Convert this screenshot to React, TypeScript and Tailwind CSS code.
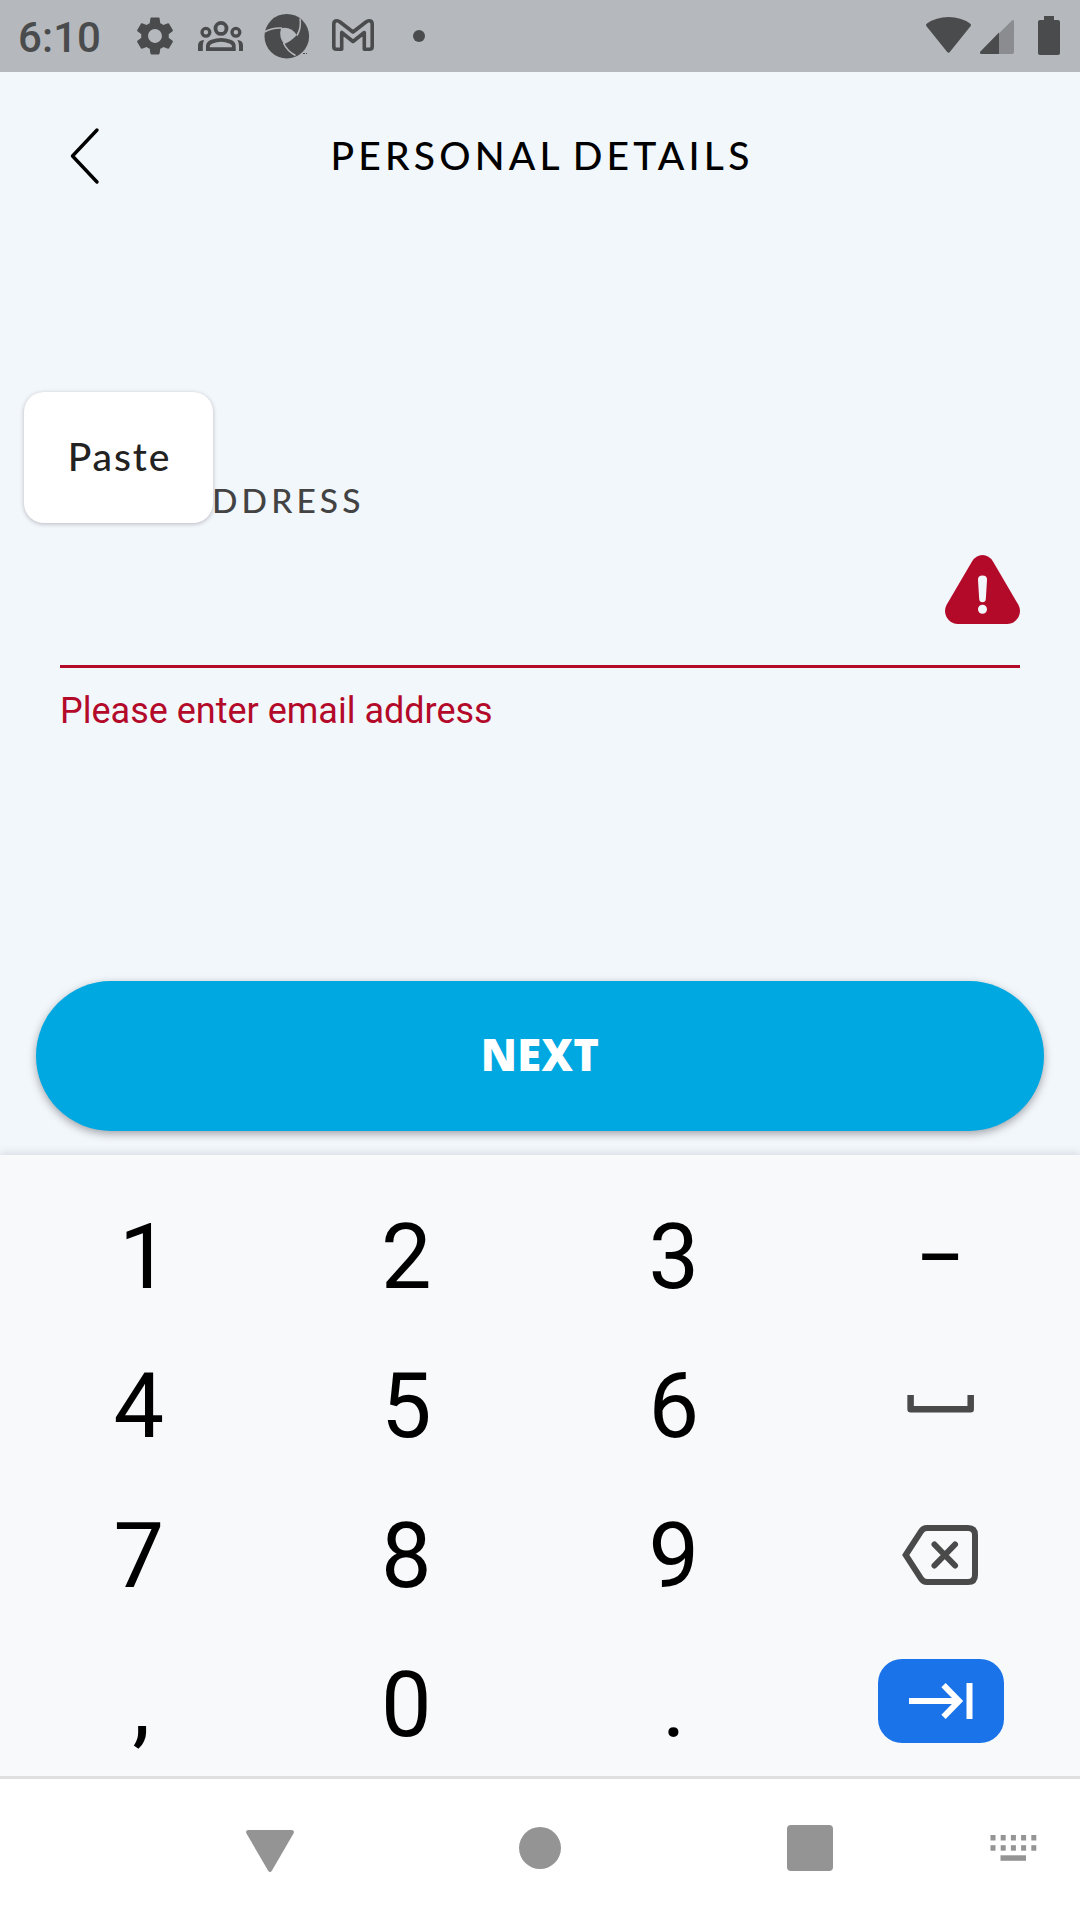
import React from 'react';
import { MdSettings } from 'react-icons/md';

const brand = "font-['Lato',sans-serif]";

function StatusBar() {
  return (
    <header className="flex h-[72px] shrink-0 items-center bg-[#b5b8bc] text-[#4a4b4c]">
      <span className="ml-[18px] w-[114px] text-[42px] leading-[72px] font-medium tracking-[0.1px] pt-[3px]">6:10</span>
      <MdSettings className="size-[46px]" />
      <svg className="ml-[20px] h-[72px] w-[45px]" viewBox="198 0 45 72" fill="none" stroke="currentColor" strokeWidth="3.8">
        <circle cx="221" cy="28.4" r="5.5" />
        <circle cx="205.9" cy="32.3" r="3.9" strokeWidth="3.3" />
        <circle cx="235.9" cy="32.3" r="3.9" strokeWidth="3.3" />
        <path d="M207.9 49.2V46Q208 43 212 41.6Q221 38.3 230 41.6Q233.8 43 233.8 46V49.2Z" />
        <path d="M198 51V45.5Q198 40.2 204 39.9Q202.800 43 202.800 46V51ZM243 51V45.500Q243 40.200 237.500 39.900Q239 43 239 46V51Z" fill="currentColor" stroke="none" />
      </svg>
      <svg className="ml-[21px] h-[72px] w-[46px]" viewBox="264 0 46 72">
        <circle cx="286.800" cy="36.200" r="22.300" fill="currentColor" />
        <path d="M281 28.200Q290.500 26 296.800 35Q291 41.500 284 44Q278.500 37 281 28.200Z" fill="#b5b8bc" />
        <g fill="none" stroke="#b5b8bc" strokeWidth="1.500">
          <path d="M264.500 32Q272 27.500 282 28" />
          <path d="M297 35.500Q301.500 28 300 18.500" />
          <path d="M283.500 43Q287 51 295.500 55.500" />
        </g>
        <path d="M303 53.500h2M306 53.500h1" stroke="currentColor" strokeWidth="1" />
      </svg>
      <svg className="ml-[22px] h-[72px] w-[42px]" viewBox="332 0 42 72" fill="none" stroke="currentColor" strokeWidth="3.600" strokeLinejoin="round">
        <path d="M333.800 46.500V24Q333.800 20.800 337 20.800Q338.500 20.800 340 22L353 32L366 22Q367.500 20.800 369 20.800Q372.200 20.800 372.200 24V46.500Q372.200 49.300 369.500 49.300H364.300V32.500L353 41.500L341.700 32.500V49.300H336.500Q333.800 49.300 333.800 46.500Z" />
      </svg>
      <span className="ml-[39px] size-[12px] rounded-full bg-current" />
      <svg className="ml-auto mr-[18px] h-[72px] w-[136px]" viewBox="926 0 136 72" fill="currentColor">
        <path d="M926.300 26Q925.500 24.500 927 23.500Q936 17 948.500 17Q961 17 970 23.500Q971.500 24.500 970.700 26L950 51.800Q948.500 53.500 947 51.800Z" />
        <path d="M1012 20.500Q1014 19 1014 22V52Q1014 54 1012 54H982Q979 54 980.500 51.500Z" opacity=".4" />
        <path d="M999 32.500V54H982Q979 54 980.500 51.500Z" />
        <path d="M1044 16h10v4h4q2 0 2 2v31q0 2-2 2h-18q-2 0-2-2v-31q0-2 2-2h4z" />
      </svg>
    </header>
  );
}

function BackIcon() {
  return (
    <svg className="h-[58px] w-[32px]" viewBox="0 0 32 58" fill="none" stroke="#000" strokeWidth="3.400" strokeLinecap="round" strokeLinejoin="round">
      <path d="M28 3L3.500 29L28 55" />
    </svg>
  );
}

function WarningIcon() {
  return (
    <svg className="h-[69px] w-[75px]" viewBox="0 0 75 69">
      <path d="M27 6.500Q31 0 37.500 0Q44 0 48 6.500L73.500 50Q76.500 56 73.500 62Q69.500 69 62.500 69H12.500Q5.500 69 1.500 62Q-1.500 56 1.500 50Z" fill="#b40a2a" />
      <path d="M33 24.500Q33 20.500 37.500 20.500Q42 20.500 42 24.500L40.800 44Q40.500 47.300 37.500 47.300Q34.500 47.300 34.200 44Z" fill="#f2f7fb" />
      <circle cx="37.500" cy="54.300" r="4.500" fill="#f2f7fb" />
    </svg>
  );
}

function SpaceIcon() {
  return (
    <svg className="h-[18px] w-[68px]" viewBox="0 0 68 18" fill="none" stroke="#4a4a4a" strokeWidth="6.500" strokeLinejoin="round">
      <path d="M3.600 0V14.300H63.700V0" />
    </svg>
  );
}

function BackspaceIcon() {
  return (
    <svg className="h-[60px] w-[76px]" viewBox="0 0 76 60" fill="none" stroke="#4a4a4a" strokeWidth="6">
      <path d="M3.700 30L19 6.500Q21 3 25 3H66Q73 3 73 10V50Q73 57 66 57H25Q21 57 19 53.500Z" />
      <path d="M32.500 19.500L53 40.500M53 19.500L32.500 40.500" strokeLinecap="round" />
    </svg>
  );
}

function TabKey() {
  return (
    <span className="flex h-[84px] w-[126px] items-center justify-center rounded-[24px] bg-[#1a73e8]">
      <svg className="h-[36px] w-[64px]" viewBox="0 0 64 36" fill="none" stroke="#fff" strokeWidth="6">
        <path d="M0 18H48M34.500 2.200L50 18L34.500 33.800" />
        <path d="M60.500 0V36" />
      </svg>
    </span>
  );
}

const keys: React.ReactNode[] = [
  <span className="pl-[11px]">1</span>, '2', '3', <span className="pr-[2px] text-[88px]">−</span>,
  '4', '5', '6', <span className="pb-[6px]"><SpaceIcon /></span>,
  '7', '8', '9', <span className="pr-[3px] pb-[3px]"><BackspaceIcon /></span>,
  <span className="pl-[5px]">,</span>, '0', '.', <span className="pr-[1px] pb-[9px]"><TabKey /></span>,
];

function Keypad() {
  return (
    <section className="grid h-[621px] shrink-0 grid-cols-4 auto-rows-[149.300px] bg-[#f8f9fb] px-[5px] pt-[28px] text-[90px] leading-[149px] text-black shadow-[0_-1px_9px_rgba(50,40,70,0.160)]">
      {keys.map((key, i) => (
        <div key={i} className="flex h-[149px] items-center justify-center">{key}</div>
      ))}
    </section>
  );
}

function NavigationBar() {
  return (
    <nav className="grid h-[144px] shrink-0 grid-cols-[1fr_270px_270px_135px_135px] border-t-[3px] border-[#dfdfdf] bg-white text-[#949494]">
      <div className="col-start-1 flex items-center justify-end pt-[3px]">
        <svg className="mr-[-24px] h-[42px] w-[48px]" viewBox="0 0 48 42" fill="currentColor">
          <path d="M2.500 0H45.500Q49 0 47.500 3.500L26 40.500Q24 43.500 22 40.500L.5 3.500Q-1 0 2.500 0Z" />
        </svg>
      </div>
      <div className="flex items-center justify-end pb-[3px]">
        <span className="mr-[-21px] size-[42px] rounded-full bg-current" />
      </div>
      <div className="flex items-center justify-end pb-[3px]">
        <span className="mr-[-23px] size-[46px] rounded-[4px] bg-current" />
      </div>
      <div className="col-start-5 flex items-center pb-[3px]">
        <svg className="ml-[45px] h-[26px] w-[47px]" viewBox="0 0 47 26" fill="currentColor">
          {[0, 10.200, 20.400, 30.600, 40.800].map((x) => (
            <React.Fragment key={x}>
              <rect x={x + 0.500} y="0" width="5" height="5.500" />
              <rect x={x + 0.500} y="10.200" width="5" height="5.500" />
            </React.Fragment>
          ))}
          <rect x="10.500" y="20.300" width="25.500" height="5.500" />
        </svg>
      </div>
    </nav>
  );
}

export default function App() {
  return (
    <div className="flex h-[1920px] w-[1080px] flex-col overflow-hidden bg-[#f2f7fb] font-['Roboto',sans-serif]">
      <StatusBar />
      <main className="flex h-[1083px] shrink-0 flex-col">
        <div className="grid h-[168px] grid-cols-[170px_1fr_170px] items-center">
          <button className="ml-[69px] w-[32px]"><BackIcon /></button>
          <h1 className={`${brand} pb-[2px] pl-[4px] text-center text-[39px] leading-[60px] font-medium tracking-[4.200px] [word-spacing:-4px] whitespace-nowrap text-black`}>PERSONAL DETAILS</h1>
        </div>
        <div className="relative mx-[60px] mt-[230px]">
          <label className={`${brand} block h-[61px] pl-[152px] text-[33.500px] leading-[60px] font-medium tracking-[4.100px] whitespace-nowrap text-[#434343]`}>DDRESS</label>
          <div className="flex h-[137px] items-start justify-end border-b-[3px] border-[#b40a2a] pt-[24px]">
            <WarningIcon />
          </div>
          <p className="mt-[20px] text-[36px] leading-[46px] text-[#b40a2a]">Please enter email address</p>
          <div className="absolute top-[-78px] left-[-36px] flex h-[131px] w-[189px] items-center justify-center rounded-[20px] bg-white shadow-[0_1px_4px_rgba(50,40,60,0.300)]">
            <span className={`${brand} pb-[3px] pl-[2px] text-[39px] leading-[60px] font-medium tracking-[1.900px] text-[#222]`}>Paste</span>
          </div>
        </div>
        <button className="mx-[36px] mt-auto mb-[24px] h-[150px] rounded-[75px] bg-[#00a8e1] pb-[2px] font-['Noto_Sans',sans-serif] text-[43.500px] font-black tracking-[0.300px] text-white shadow-[0_3px_9px_rgba(40,40,50,0.400)]">NEXT</button>
      </main>
      <Keypad />
      <NavigationBar />
    </div>
  );
}
